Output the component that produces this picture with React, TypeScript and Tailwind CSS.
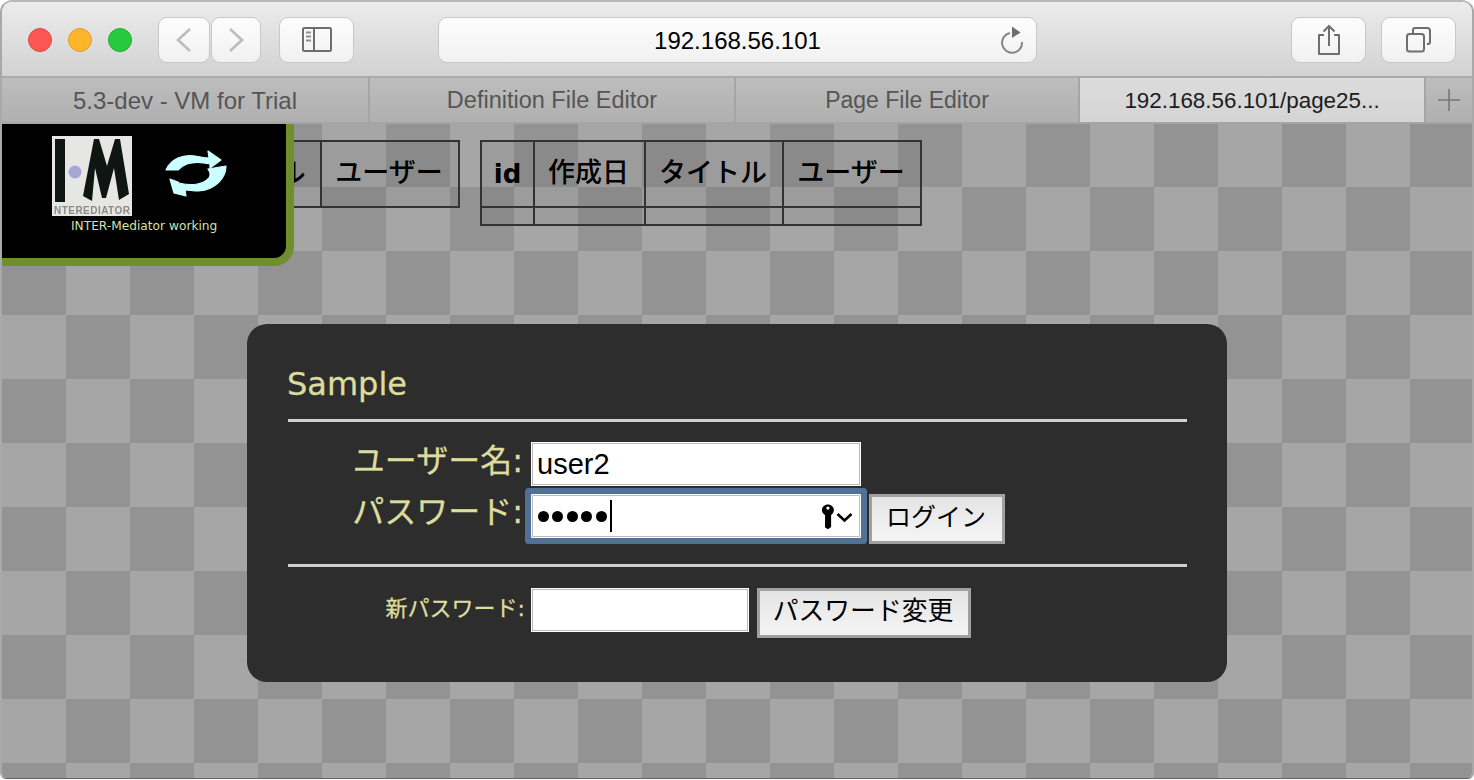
import React from "react";

const jp = "font-['Liberation_Sans','Noto_Sans_CJK_JP',sans-serif]";
const dj = "font-['DejaVu_Sans','Noto_Sans_CJK_JP',sans-serif]";

function ToolBtn({ className, children }: { className: string; children?: React.ReactNode }) {
  return (
    <div className={`h-[46px] rounded-[9px] border border-[#c8c8c8] bg-gradient-to-b from-[#fdfdfd] to-[#f1f1f1] flex items-center justify-center shrink-0 ${className}`}>
      {children}
    </div>
  );
}

function Light({ className }: { className: string }) {
  return <div className={`w-6 h-6 rounded-full border shrink-0 ${className}`} />;
}

function Tab({ w, label, active, size }: { w: string; label: string; active?: boolean; size: string }) {
  return (
    <div className={`h-full flex items-center justify-center shrink-0 border-r-2 border-[#a5a5a5] pt-[1px] ${w} ${size} ${active ? "bg-gradient-to-b from-[#dcdcdc] to-[#d4d4d4] text-[#1c1c1c]" : "bg-gradient-to-b from-[#bdbdbd] to-[#b0b0b0] text-[#555555]"}`}>
      {label}
    </div>
  );
}

function DataTable({ body, first }: { body?: boolean; first?: boolean }) {
  const th = "border-2 border-[#333333] h-[66px] p-0 text-center text-black text-[27px] font-medium align-middle pb-[2px] pr-[2px] " + jp;
  return (
    <table className="border-collapse bg-black/[0.06] table-fixed shrink-0 w-[442px]">
      <thead>
        <tr>
          <th className={`border-2 border-[#333333] h-[66px] p-0 ${first ? "w-[54px]" : "w-[53px]"} text-center align-middle text-[26px] font-bold pt-[1px] text-black ${dj}`}>id</th>
          <th className={`${th} w-[111px]`}>作成日</th>
          <th className={`${th} ${first ? "w-[137px]" : "w-[138px]"}`}>タイトル</th>
          <th className={th}>ユーザー</th>
        </tr>
      </thead>
      {body && (
        <tbody>
          <tr>
            <td className="border-2 border-[#333333] h-[18px] p-0" />
            <td className="border-2 border-[#333333] p-0" />
            <td className="border-2 border-[#333333] p-0" />
            <td className="border-2 border-[#333333] p-0" />
          </tr>
        </tbody>
      )}
    </table>
  );
}

function LogoImage() {
  return (
    <svg width="80" height="80" viewBox="0 0 80 80" className="shrink-0">
      <rect width="80" height="80" fill="#e6e6e4" />
      <g className="blur-[0.4px]">
        <rect x="3" y="3" width="10" height="63" fill="#0f1512" />
        <circle cx="23" cy="36" r="6.5" fill="#a4a6d6" />
        <path d="M31 60 L42 3 L47 3 L55 30 L63 3 L68 3 L77 58 L67 64 L62 32 L54 62 L50 62 L43 32 L40 65 Z" fill="#0f1512" />
        <text x="2" y="78" fontSize="10" fontWeight="700" fill="#8a8a8a" textLength="76" lengthAdjust="spacing" fontFamily="Liberation Sans, sans-serif">NTEREDIATOR</text>
      </g>
    </svg>
  );
}

function Refresh() {
  return (
    <svg width="62" height="48" viewBox="0 0 62 48" className="shrink-0 blur-[0.5px]">
      <g fill="#ccffff" stroke="#ccffff" strokeWidth="1.2" strokeLinejoin="round">
        <path d="M1 20 C6 9 18 4 30 6 C35 7 40 8 44 8 L43 1 L56 10 L45 18 L45 14 C36 12 28 12 22 14 C17 16 15 18 13 20 Z" />
        <path d="M61 17 C61 29 50 41 34 42 C28 42 24 41 20 41 L21 47 L9 44 L5 30 L13 33 L14 34 C26 37 38 36 44 29 C46 26 45 23 43 20 Z" transform="translate(0,-1)" />
      </g>
    </svg>
  );
}

function Key() {
  return (
    <svg width="32" height="26" viewBox="0 0 32 26" className="shrink-0">
      <g transform="scale(0.92)">
        <path fillRule="evenodd" d="M7.5 0.5 C11 0.5 14 3.2 14 6.6 C14 9 12.6 11 11 12 L11 25 L7.6 27.5 L4.4 25.6 L4.4 12 C2.4 11 1 9 1 6.6 C1 3.2 4 0.5 7.5 0.5 Z M7.5 2.6 A1.8 1.8 0 1 0 7.5 6.2 A1.8 1.8 0 1 0 7.5 2.6 Z" fill="#000" />
      </g>
      <path d="M16.5 10 L23.5 16.5 L30.5 10" fill="none" stroke="#000" strokeWidth="2.6" />
    </svg>
  );
}

const inputBox = "h-[44px] bg-white border border-white shrink-0 flex items-center";
const inputShadow = "shadow-[inset_0_0_0_1px_#bbbbbb]";
const button = "h-[50px] bg-gradient-to-b from-[#e4e4e4] to-[#f5f5f5] border-[3px] border-[#a0a0a0] text-black flex items-center justify-center pb-[3px] pr-[2px] shrink-0 " + jp;
const label = "text-right text-[#dcdc9e] shrink-0 [-webkit-text-stroke:0.3px_#dcdc9e] " + dj;

export default function App() {
  return (
    <div className={`w-[1474px] h-[780px] bg-white overflow-hidden ${jp}`}>
      <div className="w-full h-[779px] rounded-t-[12px] rounded-b-[6px] border-x-2 border-t-2 border-b border-x-[#a9a9a9] border-t-[#b9b9b9] border-b-[#666666] flex flex-col overflow-hidden">
        {/* toolbar */}
        <div className="h-[76px] shrink-0 flex items-center pl-[26px] pt-[1px] bg-gradient-to-b from-[#ececec] to-[#d2d2d2] border-b-2 border-[#ababab]">
          <Light className="bg-[#fc5753] border-[#df4744]" />
          <Light className="bg-[#fdb52a] border-[#de9f34] ml-4" />
          <Light className="bg-[#27c93f] border-[#1dad2b] ml-4" />
          <ToolBtn className="w-[52px] ml-[26px]">
            <svg width="18" height="26" viewBox="0 0 18 26"><path d="M15 2 L3 13 L15 24" fill="none" stroke="#bcbcbc" strokeWidth="2.6" /></svg>
          </ToolBtn>
          <ToolBtn className="w-[50px] ml-[1px]">
            <svg width="18" height="26" viewBox="0 0 18 26"><path d="M3 2 L15 13 L3 24" fill="none" stroke="#bcbcbc" strokeWidth="2.6" /></svg>
          </ToolBtn>
          <ToolBtn className="w-[75px] ml-[18px]">
            <svg width="30" height="25" viewBox="0 0 30 25">
              <rect x="1" y="1" width="28" height="23" rx="1.5" fill="none" stroke="#6e6e6e" strokeWidth="2" />
              <path d="M12 1 V24" stroke="#6e6e6e" strokeWidth="2" />
              <path d="M4 5.5 H9 M4 9.5 H9 M4 13.5 H9" stroke="#8e8e8e" strokeWidth="2" />
            </svg>
          </ToolBtn>
          <ToolBtn className="w-[599px] ml-[84px] relative pt-[2px]">
            <span className="text-[24px] text-black">192.168.56.101</span>
            <svg width="26" height="30" viewBox="0 0 26 30" className="absolute right-[10px] top-[7px]">
              <path d="M11 7 A10 10 0 1 0 23 16" fill="none" stroke="#858585" strokeWidth="2" transform="translate(-1,1)" />
              <path d="M12 1.5 L20.5 7.5 L12 13 Z" fill="#6e6e6e" />
            </svg>
          </ToolBtn>
          <ToolBtn className="w-[75px] ml-[254px]">
            <svg width="24" height="32" viewBox="0 0 24 32">
              <path d="M7 11 H2 V30 H22 V11 H17" fill="none" stroke="#6e6e6e" strokeWidth="2" strokeLinejoin="round" />
              <path d="M12 22 V2 M6.5 7.5 L12 2 L17.5 7.5" fill="none" stroke="#6e6e6e" strokeWidth="2" />
            </svg>
          </ToolBtn>
          <ToolBtn className="w-[75px] ml-[15px]">
            <svg width="26" height="26" viewBox="0 0 26 26">
              <rect x="1" y="7" width="17" height="17.5" rx="2.5" fill="none" stroke="#6e6e6e" strokeWidth="2" />
              <path d="M7 6.5 V3 A2 2 0 0 1 9 1 H21.5 A2.5 2.5 0 0 1 24 3.5 V15 A2 2 0 0 1 22 17 H21" fill="none" stroke="#6e6e6e" strokeWidth="2" />
            </svg>
          </ToolBtn>
        </div>
        {/* tabs */}
        <div className="h-[46px] shrink-0 flex border-b-2 border-[#a5a5a5]">
          <Tab w="w-[368px]" size="text-[24px]" label="5.3-dev - VM for Trial" />
          <Tab w="w-[366px]" size="text-[23.5px]" label="Definition File Editor" />
          <Tab w="w-[344px]" size="text-[23px]" label="Page File Editor" />
          <Tab w="w-[346px]" size="text-[22.4px]" label="192.168.56.101/page25..." active />
          <div className="flex-1 bg-gradient-to-b from-[#bdbdbd] to-[#b0b0b0] flex items-center justify-center">
            <svg width="24" height="24" viewBox="0 0 24 24"><path d="M12 1 V23 M1 12 H23" stroke="#777777" strokeWidth="1.6" /></svg>
          </div>
        </div>
        {/* page */}
        <div className="relative flex-1 bg-[repeating-conic-gradient(#a6a6a6_0_25%,#939393_0_50%)] bg-[length:128px_128px] bg-position-[0px_-1px]">
          <div className="flex items-start gap-[20px] pl-[16px] pt-[16px]">
            <DataTable first />
            <DataTable body />
          </div>

          {/* status overlay */}
          <div className="absolute left-0 top-0 w-[292px] h-[142px] bg-black border-r-[8px] border-b-[8px] border-[#6f8f2d] rounded-br-[20px] flex flex-col">
            <div className="flex items-center pl-[50px] pt-[12px]">
              <LogoImage />
              <div className="ml-[33px] mt-[-4px]"><Refresh /></div>
            </div>
            <div className={`text-[12.2px] leading-[14px] mt-[3px] ml-[69px] text-[#d3e0b0] ${dj}`}>INTER-Mediator working</div>
          </div>

          {/* login dialog */}
          <div className="absolute left-[245px] top-[200px] w-[980px] h-[358px] bg-[#2d2d2d] rounded-[20px] pl-[41px] pr-[40px] pt-[36px] flex flex-col">
            <div className={`text-[32px] leading-[48px] ml-[-1px] text-[#dcdc9e] [-webkit-text-stroke:0.3px_#dcdc9e] ${dj}`}>Sample</div>
            <div className="h-[3px] mt-[11px] bg-[#d0d0d0] shrink-0" />
            <div className="flex items-start mt-[20px]">
              <div className={`${label} w-[235px] text-[32px] leading-[38px]`}>ユーザー名:</div>
              <div className={`${inputBox} ${inputShadow} w-[330px] ml-[8px] pl-[5px] pt-[2px] text-[29px] text-black`}>user2</div>
            </div>
            <div className="flex items-start mt-[8px]">
              <div className={`${label} w-[235px] text-[32px] leading-[38px] mt-[-1px]`}>パスワード:</div>
              <div className={`${inputBox} w-[330px] ml-[8px] pl-[6px] relative rounded-[1px] shadow-[inset_0_0_0_1px_#bbbbbb,0_0_0_6px_#4f7196]`}>
                <span className="flex items-center gap-[3.4px]">
                  <i className="block w-[11px] h-[11px] rounded-full bg-black" />
                  <i className="block w-[11px] h-[11px] rounded-full bg-black" />
                  <i className="block w-[11px] h-[11px] rounded-full bg-black" />
                  <i className="block w-[11px] h-[11px] rounded-full bg-black" />
                  <i className="block w-[11px] h-[11px] rounded-full bg-black" />
                </span>
                <i className="block w-[2px] h-[32px] bg-black ml-[3px]" />
                <span className="absolute right-[7px] top-[9px]"><Key /></span>
              </div>
              <div className={`${button} text-[25px] w-[136px] ml-[8px]`}>ログイン</div>
            </div>
            <div className="h-[3px] mt-[20px] bg-[#d0d0d0] shrink-0" />
            <div className="flex items-start mt-[21px]">
              <div className={`${label} w-[237px] text-[22px] leading-[42px]`}>新パスワード:</div>
              <div className={`${inputBox} ${inputShadow} w-[218px] ml-[6px]`} />
              <div className={`${button} text-[25.8px] w-[214px] ml-[8px]`}>パスワード変更</div>
            </div>
          </div>
        </div>
      </div>
    </div>
  );
}
